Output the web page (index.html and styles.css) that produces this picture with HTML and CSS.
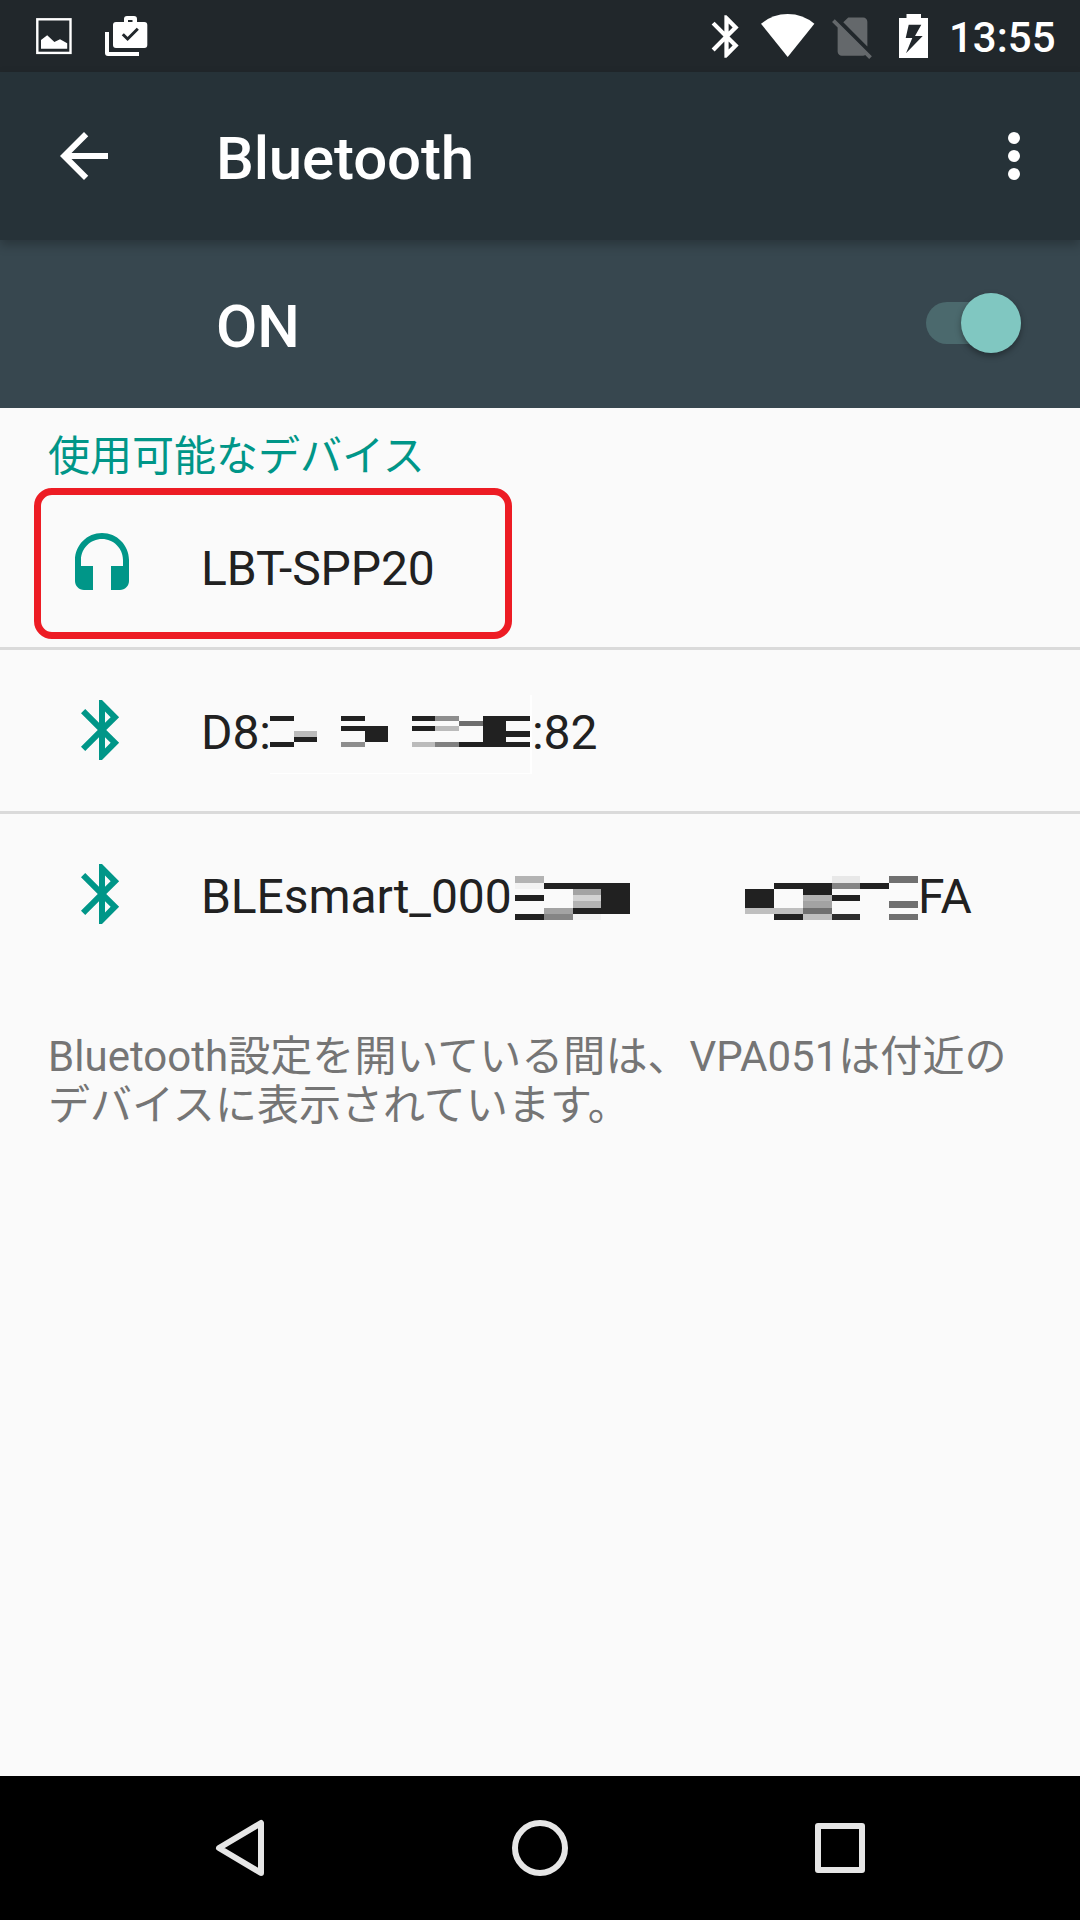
FILE: index.html
```
<!DOCTYPE html>
<html lang="ja">
<head>
  <meta charset="UTF-8">
  <title>Bluetooth</title>
  <link rel="stylesheet" href="styles.css">
</head>
<body>

  <div class="status-bar">
    <div class="notifications">
      <svg width="36" height="37" viewBox="0 0 36 37">
        <rect x="1.3" y="1.3" width="33.2" height="33.6" fill="none" stroke="#fff" stroke-width="2.4"/>
        <path d="M5 22l6.2-4.7 7.2 6.7 5.6-2.7 7.2 4v5.4H5z" fill="#fff"/>
      </svg>
      <svg width="43" height="41" viewBox="0 0 43 41">
        <path d="M0 16h4v20h30v4H3q-3 0-3-3z" fill="#fff"/>
        <path d="M19 6V3q0-3 3-3h7q3 0 3 3v3h7.3q3 0 3 3v20q0 3-3 3H11q-3 0-3-3V9q0-3 3-3zM23 6h4.5V4H23z" fill="#fff" fill-rule="evenodd"/>
        <path d="M17.8 18.2l4.8 4.8L32.8 12.8" fill="none" stroke="#21272b" stroke-width="3"/>
      </svg>
    </div>
    <div class="indicators">
      <svg width="51" height="51" viewBox="0 0 24 24">
        <path d="M17.71 7.71L12 2h-1v7.59L6.41 5 5 6.41 10.59 12 5 17.59 6.41 19 11 14.41V22h1l5.71-5.71-4.3-4.29 4.3-4.29zM13 5.83l1.88 1.88L13 9.59V5.83zm1.88 10.46L13 18.17v-3.76l1.88 1.88z" fill="#fff"/>
      </svg>
      <svg class="wifi" width="54" height="44" viewBox="0 0 54 44">
        <path d="M0 9.8Q11.5 0 26.7 0T53.4 9.8L26.7 43z" fill="#fff"/>
      </svg>
      <svg class="no-sim" width="51" height="51" viewBox="0 0 24 24">
        <path d="M18.99 5c0-1.1-.89-2-1.99-2h-7L7.66 5.34 19 16.68 18.99 5zM3.65 3.88L2.38 5.15 5 7.77V19c0 1.1.9 2 2 2h10.01c.35 0 .67-.1.96-.26l1.88 1.88 1.27-1.27L3.65 3.88z" fill="#64686b"/>
      </svg>
      <svg class="battery" width="29" height="44" viewBox="0 0 29 44">
        <path d="M7.5 0H22v4h7v40H0V4h7.5zM9.7 10.7L6.7 24h6.6L7 39.3 23.7 22H16l6.3-11.3z" fill="#fff" fill-rule="evenodd"/>
      </svg>
      <span class="clock">13:55</span>
    </div>
  </div>

  <div class="toolbar">
    <svg class="back" width="72" height="72" viewBox="0 0 24 24">
      <path d="M20 11H7.83l5.59-5.59L12 4l-8 8 8 8 1.41-1.41L7.83 13H20v-2z" fill="#fff"/>
    </svg>
    <h1>Bluetooth</h1>
    <svg width="72" height="72" viewBox="0 0 24 24">
      <g fill="#fff">
        <circle cx="12" cy="6" r="2"/>
        <circle cx="12" cy="12" r="2"/>
        <circle cx="12" cy="18" r="2"/>
      </g>
    </svg>
  </div>

  <div class="switch-bar">
    <span class="switch-text">ON</span>
    <div class="toggle"><div class="thumb"></div></div>
  </div>

  <div class="content">
    <h2>使用可能なデバイス</h2>

    <div class="device">
      <div class="highlight"></div>
      <svg class="icon" width="72" height="72" viewBox="0 0 24 24">
        <path d="M12 1c-4.97 0-9 4.03-9 9v7c0 1.66 1.34 3 3 3h3v-8H5v-2c0-3.87 3.13-7 7-7s7 3.13 7 7v2h-4v8h3c1.66 0 3-1.34 3-3v-7c0-4.97-4.03-9-9-9z"/>
      </svg>
      <span class="name">LBT-SPP20</span>
    </div>

    <div class="device">
      <svg class="icon" width="72" height="72" viewBox="0 0 24 24">
        <path d="M17.71 7.71L12 2h-1v7.59L6.41 5 5 6.41 10.59 12 5 17.59 6.41 19 11 14.41V22h1l5.71-5.71-4.3-4.29 4.3-4.29zM13 5.83l1.88 1.88L13 9.59V5.83zm1.88 10.46L13 18.17v-3.76l1.88 1.88z"/>
      </svg>
      <span class="name address">D8:</span>
      <!-- masked part of the address -->
      <svg class="mask" width="262" height="161" viewBox="0 -30 262 161">
        <path d="M0 93h262v1H0zM260 15h2v79h-2z" fill="#fff"/>
        <path d="M0 36h24v5H0zM0 62h24v5H0zM24 57h23v5H24zM71 36h24v5H71zM71 46h47v5H71zM95 51h23v11H95zM142 36h23v5h-23zM142 46h23v5h-23zM189 62h71v5h-71zM213 36h23v31h-23zM236 36h24v5h-24zM236 51h24v6h-24z" fill="#212121"/>
        <path d="M24 51h23v6H24zM142 62h23v5h-23zM165 46h24v5h-24z" fill="#bbb"/>
        <path d="M71 62h24v5H71zM165 36h24v5h-24z" fill="#8d8d8d"/>
        <path d="M165 62h24v5h-24z" fill="#808080"/>
        <path d="M189 41h24v5h-24z" fill="#6e6e6e"/>
      </svg>
      <span class="name">:82</span>
    </div>

    <div class="device">
      <svg class="icon" width="72" height="72" viewBox="0 0 24 24">
        <path d="M17.71 7.71L12 2h-1v7.59L6.41 5 5 6.41 10.59 12 5 17.59 6.41 19 11 14.41V22h1l5.71-5.71-4.3-4.29 4.3-4.29zM13 5.83l1.88 1.88L13 9.59V5.83zm1.88 10.46L13 18.17v-3.76l1.88 1.88z"/>
      </svg>
      <span class="name ble">BLEsmart_000</span>
      <!-- masked part of the name -->
      <svg class="mask" width="403" height="161" viewBox="0 -36 403 161">
        <path d="M0 45h29v6H0zM0 64h29v6H0zM29 33h86v6H29zM58 58h28v6H58zM86 33h29v31H86zM230 39h29v19h-29zM259 33h58v6h-58zM259 64h29v6h-29zM288 39h29v6h-29zM317 45h28v6h-28zM345 33h29v6h-29z" fill="#212121"/>
        <path d="M317 64h28v6h-28z" fill="#2e2e2e"/>
        <path d="M374 26h29v7h-29zM374 51h29v7h-29zM374 64h29v6h-29zM288 58h29v6h-29z" fill="#707070"/>
        <path d="M29 64h29v6H29zM317 33h28v6h-28z" fill="#858585"/>
        <path d="M29 58h29v6H29zM58 39h28v6H58zM288 51h29v7h-29z" fill="#a3a3a3"/>
        <path d="M0 26h29v7H0zM58 51h28v7H58zM288 45h29v6h-29z" fill="#b3b3b3"/>
        <path d="M230 58h58v6h-58zM288 64h29v6h-29z" fill="#bfbfbf"/>
        <path d="M58 45h28v6H58z" fill="#d2d2d2"/>
        <path d="M317 26h28v7h-28z" fill="#e8e8e8"/>
        <path d="M0 33h29v6H0zM58 64h28v6H58z" fill="#f2f2f2"/>
      </svg>
      <span class="name">FA</span>
    </div>

    <p class="note">Bluetooth設定を開いている間は、VPA051は付近の<br>デバイスに表示されています。</p>
  </div>

  <div class="nav-bar">
    <svg width="60" height="60" viewBox="0 0 60 60">
      <path d="M51 5v50L9 30z"/>
    </svg>
    <svg width="60" height="60" viewBox="0 0 60 60">
      <circle cx="30" cy="30" r="25"/>
    </svg>
    <svg width="60" height="60" viewBox="0 0 60 60">
      <rect x="8" y="8" width="44" height="44"/>
    </svg>
  </div>

</body>
</html>
```

FILE: styles.css
```
body {
  margin: 0;
  height: 1920px;
  display: flex;
  flex-direction: column;
  background-color: #fafafa;
  font-family: Roboto, 'Noto Sans CJK JP', sans-serif;
}

svg {
  display: block;
  flex-shrink: 0;
}

.status-bar {
  height: 72px;
  display: flex;
  justify-content: space-between;
  align-items: center;
  padding: 0 24px 0 36px;
  background-color: #21272b;
}

.notifications {
  display: flex;
  gap: 33px;
  align-items: center;
}

.indicators {
  display: flex;
  align-items: center;
}

.wifi {
  margin-left: 9px;
}

.no-sim {
  margin-left: 12px;
}

.battery {
  margin-left: 21px;
}

.clock {
  width: 107px;
  margin-left: 21px;
  padding-top: 2px;
  font-size: 42px;
  font-weight: 500;
  line-height: 49px;
  color: #fff;
}

.toolbar {
  position: relative;
  z-index: 1;
  height: 168px;
  display: flex;
  align-items: center;
  padding: 0 30px 0 48px;
  background-color: #263238;
  box-shadow: 0 5px 10px rgba(0, 0, 0, 0.25);
}

h1 {
  flex: 1;
  margin: 0 0 0 96px;
  padding-top: 5px;
  font-size: 60px;
  font-weight: 500;
  line-height: 70px;
  letter-spacing: -0.15px;
  color: #fff;
}

.switch-bar {
  height: 168px;
  display: flex;
  justify-content: space-between;
  align-items: center;
  padding: 0 59px 0 216px;
  background-color: #37474f;
}

.switch-text {
  padding-top: 5px;
  font-size: 60px;
  font-weight: 500;
  line-height: 70px;
  color: #fff;
}

.toggle {
  width: 95px;
  height: 42px;
  display: flex;
  align-items: center;
  justify-content: flex-end;
  margin-bottom: 2px;
  border-radius: 21px;
  background-color: #4b696d;
}

.thumb {
  width: 60px;
  height: 60px;
  flex-shrink: 0;
  border-radius: 50%;
  background-color: #80c7c1;
  box-shadow: 0 3px 6px rgba(0, 0, 0, 0.35);
}

.content {
  flex: 1;
}

h2 {
  height: 54px;
  margin: 0;
  padding: 24px 48px 0;
  font-size: 42px;
  font-weight: 400;
  line-height: 49px;
  color: #009688;
}

.device {
  position: relative;
  height: 161px;
  display: flex;
  align-items: center;
  padding-left: 66px;
  border-bottom: 3px solid #dadada;
}

.device:last-of-type {
  border-color: transparent;
}

.icon {
  margin-right: 63px;
  margin-bottom: 1px;
  fill: #009688;
}

.name {
  padding-top: 4px;
  font-size: 48px;
  line-height: 56px;
  letter-spacing: -0.1px;
  color: #212121;
  white-space: nowrap;
}

.address {
  width: 69px;
}

.ble {
  width: 314px;
}

/* red frame round the device to pick */
.highlight {
  position: absolute;
  left: 34px;
  top: 2px;
  width: 464px;
  height: 137px;
  border: 7px solid #ed1c24;
  border-radius: 18px;
}

.note {
  margin: 0;
  padding: 54px 48px 0;
  font-size: 42px;
  line-height: 49px;
  letter-spacing: 0.04px;
  color: #757575;
}

.nav-bar {
  height: 144px;
  display: flex;
  justify-content: center;
  align-items: center;
  gap: 240px;
  background-color: #000;
}

.nav-bar svg {
  fill: none;
  stroke: #e6e6e6;
  stroke-width: 6;
  stroke-linejoin: round;
}
```
